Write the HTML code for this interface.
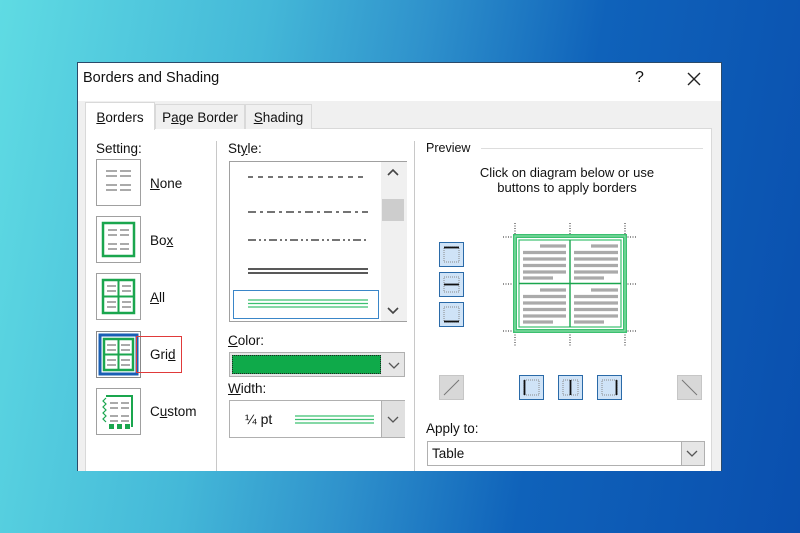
<!DOCTYPE html>
<html><head><meta charset="utf-8"><style>
*{margin:0;padding:0;box-sizing:border-box}
body{width:800px;height:533px;overflow:hidden;position:relative;font-family:"Liberation Sans",sans-serif;font-size:13px;color:#111;
background:linear-gradient(100deg,#5fdbe3 0%,#44b8d8 30%,#2f92cc 48%,#0f62ba 68%,#0a4fae 100%)}
.a{position:absolute}
.dlg{left:77px;top:62px;width:645px;height:409px;background:#f0f0f0;border:1px solid #2a4a6a;border-bottom:none;overflow:hidden}
.title{left:0;top:0;width:645px;height:38px;background:#fff}
.tab{top:41px;height:25px;border:1px solid #d9d9d9;border-bottom:none;background:#f0f0f0;font-size:13.5px;padding-top:5px;text-align:center}
.panel{left:7px;top:65px;width:627px;height:360px;background:#fff;border:1px solid #d9d9d9}
.sbox{left:18px;width:45px;height:47px;border:1px solid #a0a0a0;background:#fff}
.lbl{font-size:13.5px}
u{text-decoration:underline}
.btn{width:25px;height:25px;border:1px solid #2a6aa8;background:#cfe3f7}
.btng{width:25px;height:25px;border:1px solid #c6c6c6;background:#d8d8d8}
</style></head><body>
<div class="a dlg">
 <div class="a title"></div>
 <div class="a" style="left:5px;top:7px;font-size:14.5px">Borders and Shading</div>
 <div class="a" style="left:557px;top:6px;font-size:16px">?</div>
 <svg class="a" style="left:608px;top:8px" width="16" height="16"><path d="M2 2L14 14M14 2L2 14" stroke="#222" stroke-width="1.4"/></svg>
 <div class="a panel"></div>
 <div class="a tab" style="left:7px;width:70px;top:39px;height:28px;background:#fff;padding-top:7px"><u>B</u>orders</div>
 <div class="a tab" style="left:77px;width:90px">P<u>a</u>ge Border</div>
 <div class="a tab" style="left:167px;width:67px"><u>S</u>hading</div>
 <div class="a lbl" style="left:18px;top:78px">Setting:</div>
 <div class="a" style="left:138px;top:78px;width:1px;height:340px;background:#c8c8c8"></div>
 <div class="a" style="left:336px;top:78px;width:1px;height:340px;background:#c8c8c8"></div>
 <div class="a sbox" style="top:96px"><svg width="43" height="45"><g stroke="#aaa" stroke-width="2"><path d="M9 11h11M23 11h11M9 16h11M23 16h11M9 25h11M23 25h11M9 30h11M23 30h11"/></g></svg></div>
 <div class="a lbl" style="left:72px;top:113px"><u>N</u>one</div>
 <div class="a sbox" style="top:153px"><svg width="43" height="45"><rect x="6" y="6" width="31" height="33" fill="none" stroke="#1aa64e" stroke-width="2.5"/><g stroke="#aaa" stroke-width="2"><path d="M11 13h9M23 13h9M11 18h9M23 18h9M11 27h9M23 27h9M11 32h9M23 32h9"/></g></svg></div>
 <div class="a lbl" style="left:72px;top:170px">Bo<u>x</u></div>
 <div class="a sbox" style="top:210px"><svg width="43" height="45"><rect x="6" y="6" width="31" height="33" fill="none" stroke="#1aa64e" stroke-width="2.5"/><path d="M21.5 6v33M6 22.5h31" stroke="#1aa64e" stroke-width="2"/><g stroke="#aaa" stroke-width="2"><path d="M10 12h9M25 12h9M10 17h9M25 17h9M10 28h9M25 28h9M10 33h9M25 33h9"/></g></svg></div>
 <div class="a lbl" style="left:72px;top:227px"><u>A</u>ll</div>
 <div class="a sbox" style="top:268px;border-color:#888"><svg width="43" height="45"><rect x="3" y="3" width="37" height="39" fill="none" stroke="#1a5fb4" stroke-width="3"/><rect x="7" y="7" width="29" height="31" fill="none" stroke="#1aa64e" stroke-width="2.5"/><path d="M21.5 7v31M7 22.5h29" stroke="#1aa64e" stroke-width="2"/><g stroke="#aaa" stroke-width="2"><path d="M10 13h9M24 13h9M10 18h9M24 18h9M10 28h9M24 28h9M10 33h9M24 33h9"/></g></svg></div>
 <div class="a" style="left:58px;top:273px;width:46px;height:37px;border:1.5px solid #e03a3a"></div>
 <div class="a lbl" style="left:72px;top:284px">Gri<u>d</u></div>
 <div class="a sbox" style="top:325px"><svg width="43" height="45"><path d="M9 7h26v31" fill="none" stroke="#1aa64e" stroke-width="2"/><path d="M9 9l-3 3 3 3-3 3 3 3-3 3 3 3-3 3 3 3" fill="none" stroke="#1aa64e" stroke-width="1.2"/><g fill="#1aa64e"><rect x="12" y="35" width="5" height="5"/><rect x="20" y="35" width="5" height="5"/><rect x="28" y="35" width="5" height="5"/></g><g stroke="#aaa" stroke-width="2"><path d="M13 14h8M24 14h8M13 19h8M24 19h8M13 27h8M24 27h8M13 32h8M24 32h8"/></g></svg></div>
 <div class="a lbl" style="left:72px;top:341px">C<u>u</u>stom</div>
 <div class="a lbl" style="left:150px;top:78px">St<u>y</u>le:</div>
 <div class="a" style="left:151px;top:98px;width:178px;height:161px;border:1px solid #a0a0a0;background:#fff">
  <svg class="a" style="left:18px;top:14px" width="122" height="100"><g stroke="#222" stroke-width="1.3"><path d="M0 1h120" stroke-dasharray="5 5"/><path d="M0 36h120" stroke-dasharray="8 4 3 4"/><path d="M0 64h120" stroke-dasharray="8 3 2 3 2 3"/><path d="M0 93h120M0 97h120" stroke-width="1.6"/></g></svg>
  <div class="a" style="left:3px;top:128px;width:146px;height:29px;border:1.5px solid #3a86c8"></div>
  <svg class="a" style="left:18px;top:137px" width="122" height="10"><g stroke="#3cc070" stroke-width="1.2"><path d="M0 1h120M0 4.5h120M0 8h120"/></g></svg>
  <div class="a" style="left:151px;top:0;width:26px;height:159px;background:#f0f0f0"></div>
  <div class="a" style="left:152px;top:37px;width:22px;height:22px;background:#cdcdcd"></div>
  <svg class="a" style="left:157px;top:6px" width="12" height="8"><path d="M1 7l5-5 5 5" fill="none" stroke="#444" stroke-width="1.6"/></svg>
  <svg class="a" style="left:157px;top:145px" width="12" height="8"><path d="M1 1l5 5 5-5" fill="none" stroke="#444" stroke-width="1.6"/></svg>
 </div>
 <div class="a lbl" style="left:150px;top:270px"><u>C</u>olor:</div>
 <div class="a" style="left:151px;top:289px;width:176px;height:25px;border:1px solid #b0b0b0;background:#e6e6e6">
  <div class="a" style="left:2px;top:2px;width:149px;height:19px;border:1px dotted #222;background:#0faa4a"></div>
  <svg class="a" style="left:158px;top:9px" width="12" height="8"><path d="M1 1l5 5 5-5" fill="none" stroke="#555" stroke-width="1.3"/></svg>
 </div>
 <div class="a lbl" style="left:150px;top:318px"><u>W</u>idth:</div>
 <div class="a" style="left:151px;top:337px;width:176px;height:38px;border:1px solid #b0b0b0;background:#fff">
  <div class="a" style="left:15px;top:10px;font-size:14px">¼ pt</div>
  <svg class="a" style="left:65px;top:14px" width="80" height="10"><g stroke="#3cc070" stroke-width="1.2"><path d="M0 1h79M0 4.5h79M0 8h79"/></g></svg>
  <div class="a" style="left:151px;top:0;width:24px;height:36px;background:#e0e0e0;border-left:1px solid #b0b0b0"></div>
  <svg class="a" style="left:157px;top:15px" width="12" height="8"><path d="M1 1l5 5 5-5" fill="none" stroke="#555" stroke-width="1.3"/></svg>
 </div>
 <div class="a" style="left:348px;top:78px;font-size:12.5px">Preview</div>
 <div class="a" style="left:403px;top:85px;width:222px;height:1px;background:#ddd"></div>
 <div class="a" style="left:350px;top:102px;width:278px;text-align:center;font-size:13px;line-height:15px">Click on diagram below or use<br>buttons to apply borders</div>
 <svg class="a" style="left:420px;top:160px" width="150" height="125">
  <g stroke="#222" stroke-dasharray="1 1.5" fill="none"><path d="M17 0v18M72 0v18M127 0v18M5 14h12M127 14h12M5 61h12M127 61h12M5 108h12M127 108h12M17 104v20M72 104v20M127 104v20"/></g>
  <rect x="17" y="13" width="110" height="95" fill="#fff" stroke="#3cc070" stroke-width="4"/>
  <rect x="17" y="13" width="110" height="95" fill="none" stroke="#9de3b5" stroke-width="1"/>
  <rect x="21" y="17" width="102" height="87" fill="none" stroke="#3cc070" stroke-width="1.2"/>
  <path d="M72 17v87M21 60.5h102" stroke="#1aa64e" stroke-width="1.4"/>
  <g stroke="#aaa" stroke-width="3.2"><path d="M42 23h26M25 29.5h43M25 36h43M25 42.5h43M25 49h43M25 55h30M93 23h27M76 29.5h44M76 36h44M76 42.5h44M76 49h44M76 55h30M42 67h26M25 73.5h43M25 80h43M25 86.5h43M25 93h43M25 99h30M93 67h27M76 73.5h44M76 80h44M76 86.5h44M76 93h44M76 99h30"/></g>
 </svg>
 <div class="a btn" style="left:361px;top:179px"><svg width="23" height="23"><rect x="4" y="4" width="15" height="15" fill="none" stroke="#888" stroke-dasharray="1 1"/><path d="M4 4.5h15" stroke="#111" stroke-width="1.8"/></svg></div>
 <div class="a btn" style="left:361px;top:209px"><svg width="23" height="23"><rect x="4" y="4" width="15" height="15" fill="none" stroke="#888" stroke-dasharray="1 1"/><path d="M4 11.5h15" stroke="#111" stroke-width="1.8"/></svg></div>
 <div class="a btn" style="left:361px;top:239px"><svg width="23" height="23"><rect x="4" y="4" width="15" height="15" fill="none" stroke="#888" stroke-dasharray="1 1"/><path d="M4 18.5h15" stroke="#111" stroke-width="1.8"/></svg></div>
 <div class="a btng" style="left:361px;top:312px"><svg width="23" height="23"><path d="M4 19L19 4" stroke="#777"/></svg></div>
 <div class="a btn" style="left:441px;top:312px"><svg width="23" height="23"><rect x="4" y="4" width="15" height="15" fill="none" stroke="#888" stroke-dasharray="1 1"/><path d="M4.5 4v15" stroke="#111" stroke-width="1.8"/></svg></div>
 <div class="a btn" style="left:480px;top:312px"><svg width="23" height="23"><rect x="4" y="4" width="15" height="15" fill="none" stroke="#888" stroke-dasharray="1 1"/><path d="M11.5 4v15" stroke="#111" stroke-width="1.8"/></svg></div>
 <div class="a btn" style="left:519px;top:312px"><svg width="23" height="23"><rect x="4" y="4" width="15" height="15" fill="none" stroke="#888" stroke-dasharray="1 1"/><path d="M18.5 4v15" stroke="#111" stroke-width="1.8"/></svg></div>
 <div class="a btng" style="left:599px;top:312px"><svg width="23" height="23"><path d="M4 4L19 19" stroke="#777"/></svg></div>
 <div class="a lbl" style="left:348px;top:358px">Apply to:</div>
 <div class="a" style="left:349px;top:378px;width:278px;height:25px;border:1px solid #b0b0b0;background:#fff">
  <div class="a" style="left:4px;top:4px;font-size:13.5px">Table</div>
  <div class="a" style="left:253px;top:0;width:23px;height:23px;background:#e6e6e6;border-left:1px solid #b0b0b0"></div>
  <svg class="a" style="left:258px;top:8px" width="12" height="8"><path d="M1 1l5 5 5-5" fill="none" stroke="#555" stroke-width="1.3"/></svg>
 </div>
</div>
</body></html>
